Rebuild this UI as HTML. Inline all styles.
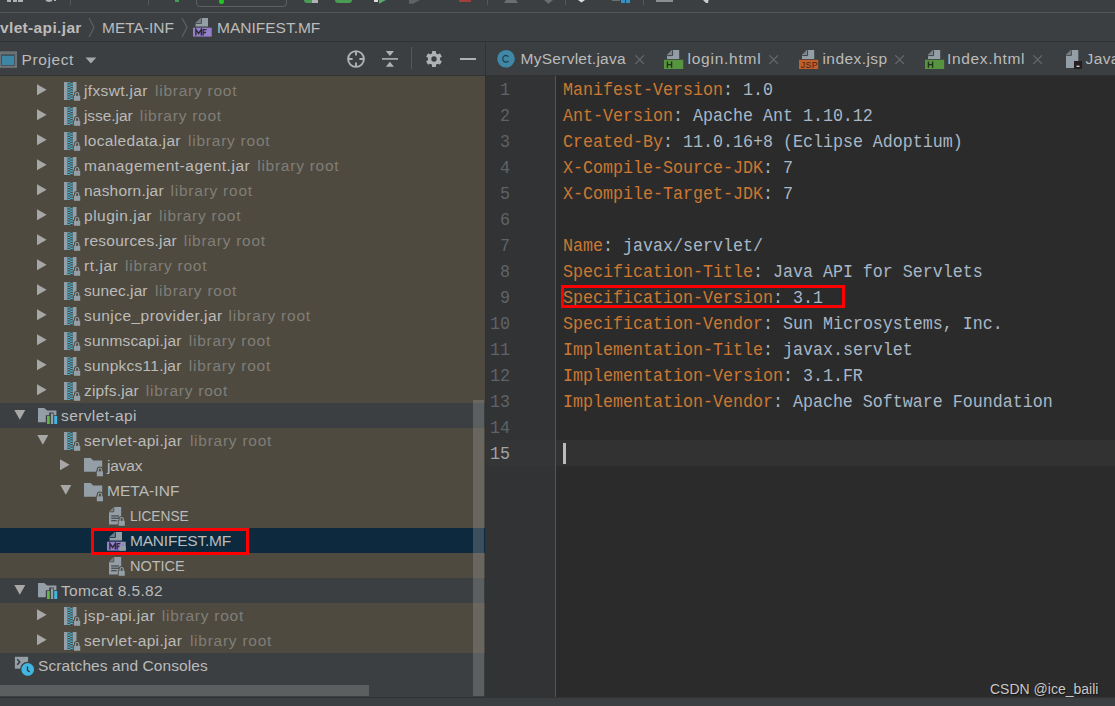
<!DOCTYPE html>
<html><head><meta charset="utf-8">
<style>
*{margin:0;padding:0;box-sizing:border-box}
html,body{width:1115px;height:706px;overflow:hidden;background:#3C3F41}
body{position:relative;font-family:"Liberation Sans",sans-serif;font-size:15.5px;color:#BBBBBB}
.a{position:absolute}
.t{position:absolute;white-space:pre;line-height:20px}
.lib{color:#807E78;letter-spacing:0.75px}
.ln{position:absolute;left:486px;width:24px;transform:translateY(2px) scaleY(1.08);transform-origin:0 19px;text-align:right;font-family:"Liberation Mono",monospace;font-size:16.67px;line-height:26px;white-space:pre}
.cl{position:absolute;left:563px;transform:translateY(2px) scaleY(1.08);transform-origin:0 19px;font-family:"Liberation Mono",monospace;font-size:16.67px;color:#A9B7C6;line-height:26px;white-space:pre}
.k{color:#CC7832}
</style></head><body>

<!-- top toolbar (cut off) -->
<div class="a" style="left:7px;top:0;width:4px;height:2px;background:#AFB1B3"></div>
<div class="a" style="left:12.5px;top:0;width:4px;height:2px;background:#AFB1B3"></div>
<div class="a" style="left:18px;top:0;width:4.5px;height:2px;background:#AFB1B3"></div>
<div class="a" style="left:44.5px;top:-6px;width:8px;height:8px;border-radius:50%;background:#AFB1B3"></div>
<div class="a" style="left:54px;top:0;width:2px;height:1px;background:#AFB1B3"></div>
<div class="a" style="left:70px;top:0;width:1px;height:5px;background:#55585A"></div>
<div class="a" style="left:148px;top:0;width:1px;height:5px;background:#55585A"></div>
<div class="a" style="left:486.5px;top:0;width:1px;height:5px;background:#55585A"></div>
<div class="a" style="left:564.5px;top:0;width:1px;height:5px;background:#55585A"></div>
<div class="a" style="left:642.5px;top:0;width:1px;height:5px;background:#55585A"></div>
<div class="a" style="left:175px;top:0;width:4px;height:2px;background:#499C54"></div>
<div class="a" style="left:195.5px;top:-10px;width:91.5px;height:17px;border:1px solid #5E6060;border-radius:4px"></div>
<div class="a" style="left:219px;top:-1px;width:5px;height:5px;border-radius:50%;background:#1EC81E"></div>
<div class="a" style="left:304px;top:0;width:8px;height:3px;background:#499C54;border-radius:0 0 0 4px"></div>
<div class="a" style="left:312px;top:0;width:6px;height:3px;background:#AFB1B3"></div>
<div class="a" style="left:335px;top:0;width:17px;height:3px;background:#499C54;border-radius:0 0 8px 8px"></div>
<div class="a" style="left:374px;top:0;width:4px;height:1.5px;background:#DDDDDD"></div>
<svg class="a" style="left:379px;top:0" width="8" height="4"><path d="M0 0H7L0 3.7z" fill="#59A869"/></svg>
<svg class="a" style="left:409px;top:0" width="12" height="4"><path d="M0 0H11L4 3.7H0z" fill="#606366"/></svg>
<div class="a" style="left:459px;top:0;width:12px;height:1.5px;background:#A0403C"></div>
<svg class="a" style="left:503px;top:0" width="16" height="4"><path d="M3 0H13L15 3H1z" fill="#6B6E70"/></svg>
<svg class="a" style="left:544px;top:0" width="9" height="4"><path d="M0 0H9L4.5 3.7z" fill="#6B6E70"/></svg>
<svg class="a" style="left:578px;top:0" width="8" height="3"><path d="M0 0H7L3.5 2.5z" fill="#DDDDDD"/></svg>
<div class="a" style="left:612px;top:0;width:8px;height:1px;background:#6B6E70"></div>
<div class="a" style="left:621px;top:0;width:4px;height:3px;background:#3592C4"></div>
<div class="a" style="left:626px;top:0;width:4px;height:3px;background:#3592C4"></div>
<div class="a" style="left:656px;top:0;width:17px;height:2px;background:#8C8E90"></div>
<svg class="a" style="left:703px;top:0" width="6" height="4"><path d="M0 0H5.5L5 3L3 3z" fill="#CCCCCC"/></svg>
<div class="a" style="left:0;top:12px;width:1115px;height:1px;background:#545658"></div>

<!-- breadcrumb bar -->
<div class="a" style="left:0;top:41px;width:1115px;height:1px;background:#323232"></div>
<div class="t" style="left:0;top:17.5px;font-weight:bold;letter-spacing:0.35px">vlet-api.jar</div>
<div class="t" style="left:102px;top:17.5px">META-INF</div>
<div class="t" style="left:217px;top:17.5px;letter-spacing:0px">MANIFEST.MF</div>

<!-- project header -->
<div class="t" style="left:21.5px;top:49.5px;letter-spacing:0.6px">Project</div>
<div class="a" style="left:485px;top:42px;width:1px;height:655px;background:#323232"></div>

<!-- tabs -->
<div class="t" style="left:520.5px;top:49px;letter-spacing:0.27px">MyServlet.java</div>
<div class="t" style="left:687.5px;top:49px;letter-spacing:0.75px">login.html</div>
<div class="t" style="left:822.5px;top:49px;letter-spacing:0.42px">index.jsp</div>
<div class="t" style="left:947px;top:49px;letter-spacing:0.67px">Index.html</div>
<div class="t" style="left:1085.5px;top:49px;letter-spacing:0.4px">Java</div>

<div class="a" style="left:0;top:76px;width:485px;height:2px;background:#4E4A3F"></div>
<div class="a" style="left:0;top:75px;width:1115px;height:1px;background:#323232"></div>
<div class="a" style="left:0;top:78px;width:485px;height:25px;background:#4E4A3F"></div>
<svg class="a" style="left:37px;top:84px" width="11" height="12"><path d="M0 0.3L9.6 5.8L0 11.3z" fill="#A7A7A7"/></svg>
<svg class="a" style="left:64.3px;top:82px" width="18" height="20" viewBox="0 0 18 20">
<rect x="0" y="0" width="3.5" height="18" fill="#939EA6"/>
<path d="M3.7 0.7h2.5M6.2 1.9h2.5M3.7 3.1h2.5M6.2 4.3h2.5M3.7 5.5h2.5M6.2 6.7h2.5M3.7 7.9h2.5M6.2 9.1h2.5M3.7 10.3h2.5M6.2 11.5h2.5M3.7 12.7h2.5M6.2 13.9h2.5M3.7 15.1h2.5M6.2 16.3h2.5M3.7 17.5h2.5" stroke="#40B6E0" stroke-width="1.15"/>
<rect x="8.8" y="0" width="3.7" height="18" fill="#939EA6"/>
<path d="M11.5 14.1V12.1a1.6 1.6 0 0 1 3.2 0V14.1" stroke="#4E4A3F" stroke-width="3.1" fill="none"/><rect x="9.2" y="13.1" width="7.8" height="6.5" fill="#4E4A3F"/><path d="M11.5 14.1V12.1a1.6 1.6 0 0 1 3.2 0V14.1" stroke="#939EA6" stroke-width="1.2" fill="none"/><rect x="10" y="13.8" width="6.2" height="5" fill="#939EA6"/>
</svg>
<div class="t" style="left:84px;top:81px;letter-spacing:0.345px">jfxswt.jar</div>
<div class="t lib" style="left:155.0px;top:81px">library root</div>
<div class="a" style="left:0;top:103px;width:485px;height:25px;background:#4E4A3F"></div>
<svg class="a" style="left:37px;top:109px" width="11" height="12"><path d="M0 0.3L9.6 5.8L0 11.3z" fill="#A7A7A7"/></svg>
<svg class="a" style="left:64.3px;top:107px" width="18" height="20" viewBox="0 0 18 20">
<rect x="0" y="0" width="3.5" height="18" fill="#939EA6"/>
<path d="M3.7 0.7h2.5M6.2 1.9h2.5M3.7 3.1h2.5M6.2 4.3h2.5M3.7 5.5h2.5M6.2 6.7h2.5M3.7 7.9h2.5M6.2 9.1h2.5M3.7 10.3h2.5M6.2 11.5h2.5M3.7 12.7h2.5M6.2 13.9h2.5M3.7 15.1h2.5M6.2 16.3h2.5M3.7 17.5h2.5" stroke="#40B6E0" stroke-width="1.15"/>
<rect x="8.8" y="0" width="3.7" height="18" fill="#939EA6"/>
<path d="M11.5 14.1V12.1a1.6 1.6 0 0 1 3.2 0V14.1" stroke="#4E4A3F" stroke-width="3.1" fill="none"/><rect x="9.2" y="13.1" width="7.8" height="6.5" fill="#4E4A3F"/><path d="M11.5 14.1V12.1a1.6 1.6 0 0 1 3.2 0V14.1" stroke="#939EA6" stroke-width="1.2" fill="none"/><rect x="10" y="13.8" width="6.2" height="5" fill="#939EA6"/>
</svg>
<div class="t" style="left:84px;top:106px;letter-spacing:-0.073px">jsse.jar</div>
<div class="t lib" style="left:139.7px;top:106px">library root</div>
<div class="a" style="left:0;top:128px;width:485px;height:25px;background:#4E4A3F"></div>
<svg class="a" style="left:37px;top:134px" width="11" height="12"><path d="M0 0.3L9.6 5.8L0 11.3z" fill="#A7A7A7"/></svg>
<svg class="a" style="left:64.3px;top:132px" width="18" height="20" viewBox="0 0 18 20">
<rect x="0" y="0" width="3.5" height="18" fill="#939EA6"/>
<path d="M3.7 0.7h2.5M6.2 1.9h2.5M3.7 3.1h2.5M6.2 4.3h2.5M3.7 5.5h2.5M6.2 6.7h2.5M3.7 7.9h2.5M6.2 9.1h2.5M3.7 10.3h2.5M6.2 11.5h2.5M3.7 12.7h2.5M6.2 13.9h2.5M3.7 15.1h2.5M6.2 16.3h2.5M3.7 17.5h2.5" stroke="#40B6E0" stroke-width="1.15"/>
<rect x="8.8" y="0" width="3.7" height="18" fill="#939EA6"/>
<path d="M11.5 14.1V12.1a1.6 1.6 0 0 1 3.2 0V14.1" stroke="#4E4A3F" stroke-width="3.1" fill="none"/><rect x="9.2" y="13.1" width="7.8" height="6.5" fill="#4E4A3F"/><path d="M11.5 14.1V12.1a1.6 1.6 0 0 1 3.2 0V14.1" stroke="#939EA6" stroke-width="1.2" fill="none"/><rect x="10" y="13.8" width="6.2" height="5" fill="#939EA6"/>
</svg>
<div class="t" style="left:84px;top:131px;letter-spacing:0.331px">localedata.jar</div>
<div class="t lib" style="left:188.1px;top:131px">library root</div>
<div class="a" style="left:0;top:153px;width:485px;height:25px;background:#4E4A3F"></div>
<svg class="a" style="left:37px;top:159px" width="11" height="12"><path d="M0 0.3L9.6 5.8L0 11.3z" fill="#A7A7A7"/></svg>
<svg class="a" style="left:64.3px;top:157px" width="18" height="20" viewBox="0 0 18 20">
<rect x="0" y="0" width="3.5" height="18" fill="#939EA6"/>
<path d="M3.7 0.7h2.5M6.2 1.9h2.5M3.7 3.1h2.5M6.2 4.3h2.5M3.7 5.5h2.5M6.2 6.7h2.5M3.7 7.9h2.5M6.2 9.1h2.5M3.7 10.3h2.5M6.2 11.5h2.5M3.7 12.7h2.5M6.2 13.9h2.5M3.7 15.1h2.5M6.2 16.3h2.5M3.7 17.5h2.5" stroke="#40B6E0" stroke-width="1.15"/>
<rect x="8.8" y="0" width="3.7" height="18" fill="#939EA6"/>
<path d="M11.5 14.1V12.1a1.6 1.6 0 0 1 3.2 0V14.1" stroke="#4E4A3F" stroke-width="3.1" fill="none"/><rect x="9.2" y="13.1" width="7.8" height="6.5" fill="#4E4A3F"/><path d="M11.5 14.1V12.1a1.6 1.6 0 0 1 3.2 0V14.1" stroke="#939EA6" stroke-width="1.2" fill="none"/><rect x="10" y="13.8" width="6.2" height="5" fill="#939EA6"/>
</svg>
<div class="t" style="left:84px;top:156px;letter-spacing:0.512px">management-agent.jar</div>
<div class="t lib" style="left:257.2px;top:156px">library root</div>
<div class="a" style="left:0;top:178px;width:485px;height:25px;background:#4E4A3F"></div>
<svg class="a" style="left:37px;top:184px" width="11" height="12"><path d="M0 0.3L9.6 5.8L0 11.3z" fill="#A7A7A7"/></svg>
<svg class="a" style="left:64.3px;top:182px" width="18" height="20" viewBox="0 0 18 20">
<rect x="0" y="0" width="3.5" height="18" fill="#939EA6"/>
<path d="M3.7 0.7h2.5M6.2 1.9h2.5M3.7 3.1h2.5M6.2 4.3h2.5M3.7 5.5h2.5M6.2 6.7h2.5M3.7 7.9h2.5M6.2 9.1h2.5M3.7 10.3h2.5M6.2 11.5h2.5M3.7 12.7h2.5M6.2 13.9h2.5M3.7 15.1h2.5M6.2 16.3h2.5M3.7 17.5h2.5" stroke="#40B6E0" stroke-width="1.15"/>
<rect x="8.8" y="0" width="3.7" height="18" fill="#939EA6"/>
<path d="M11.5 14.1V12.1a1.6 1.6 0 0 1 3.2 0V14.1" stroke="#4E4A3F" stroke-width="3.1" fill="none"/><rect x="9.2" y="13.1" width="7.8" height="6.5" fill="#4E4A3F"/><path d="M11.5 14.1V12.1a1.6 1.6 0 0 1 3.2 0V14.1" stroke="#939EA6" stroke-width="1.2" fill="none"/><rect x="10" y="13.8" width="6.2" height="5" fill="#939EA6"/>
</svg>
<div class="t" style="left:84px;top:181px;letter-spacing:0.205px">nashorn.jar</div>
<div class="t lib" style="left:170.6px;top:181px">library root</div>
<div class="a" style="left:0;top:203px;width:485px;height:25px;background:#4E4A3F"></div>
<svg class="a" style="left:37px;top:209px" width="11" height="12"><path d="M0 0.3L9.6 5.8L0 11.3z" fill="#A7A7A7"/></svg>
<svg class="a" style="left:64.3px;top:207px" width="18" height="20" viewBox="0 0 18 20">
<rect x="0" y="0" width="3.5" height="18" fill="#939EA6"/>
<path d="M3.7 0.7h2.5M6.2 1.9h2.5M3.7 3.1h2.5M6.2 4.3h2.5M3.7 5.5h2.5M6.2 6.7h2.5M3.7 7.9h2.5M6.2 9.1h2.5M3.7 10.3h2.5M6.2 11.5h2.5M3.7 12.7h2.5M6.2 13.9h2.5M3.7 15.1h2.5M6.2 16.3h2.5M3.7 17.5h2.5" stroke="#40B6E0" stroke-width="1.15"/>
<rect x="8.8" y="0" width="3.7" height="18" fill="#939EA6"/>
<path d="M11.5 14.1V12.1a1.6 1.6 0 0 1 3.2 0V14.1" stroke="#4E4A3F" stroke-width="3.1" fill="none"/><rect x="9.2" y="13.1" width="7.8" height="6.5" fill="#4E4A3F"/><path d="M11.5 14.1V12.1a1.6 1.6 0 0 1 3.2 0V14.1" stroke="#939EA6" stroke-width="1.2" fill="none"/><rect x="10" y="13.8" width="6.2" height="5" fill="#939EA6"/>
</svg>
<div class="t" style="left:84px;top:206px;letter-spacing:0.510px">plugin.jar</div>
<div class="t lib" style="left:159.0px;top:206px">library root</div>
<div class="a" style="left:0;top:228px;width:485px;height:25px;background:#4E4A3F"></div>
<svg class="a" style="left:37px;top:234px" width="11" height="12"><path d="M0 0.3L9.6 5.8L0 11.3z" fill="#A7A7A7"/></svg>
<svg class="a" style="left:64.3px;top:232px" width="18" height="20" viewBox="0 0 18 20">
<rect x="0" y="0" width="3.5" height="18" fill="#939EA6"/>
<path d="M3.7 0.7h2.5M6.2 1.9h2.5M3.7 3.1h2.5M6.2 4.3h2.5M3.7 5.5h2.5M6.2 6.7h2.5M3.7 7.9h2.5M6.2 9.1h2.5M3.7 10.3h2.5M6.2 11.5h2.5M3.7 12.7h2.5M6.2 13.9h2.5M3.7 15.1h2.5M6.2 16.3h2.5M3.7 17.5h2.5" stroke="#40B6E0" stroke-width="1.15"/>
<rect x="8.8" y="0" width="3.7" height="18" fill="#939EA6"/>
<path d="M11.5 14.1V12.1a1.6 1.6 0 0 1 3.2 0V14.1" stroke="#4E4A3F" stroke-width="3.1" fill="none"/><rect x="9.2" y="13.1" width="7.8" height="6.5" fill="#4E4A3F"/><path d="M11.5 14.1V12.1a1.6 1.6 0 0 1 3.2 0V14.1" stroke="#939EA6" stroke-width="1.2" fill="none"/><rect x="10" y="13.8" width="6.2" height="5" fill="#939EA6"/>
</svg>
<div class="t" style="left:84px;top:231px;letter-spacing:0.259px">resources.jar</div>
<div class="t lib" style="left:183.7px;top:231px">library root</div>
<div class="a" style="left:0;top:253px;width:485px;height:25px;background:#4E4A3F"></div>
<svg class="a" style="left:37px;top:259px" width="11" height="12"><path d="M0 0.3L9.6 5.8L0 11.3z" fill="#A7A7A7"/></svg>
<svg class="a" style="left:64.3px;top:257px" width="18" height="20" viewBox="0 0 18 20">
<rect x="0" y="0" width="3.5" height="18" fill="#939EA6"/>
<path d="M3.7 0.7h2.5M6.2 1.9h2.5M3.7 3.1h2.5M6.2 4.3h2.5M3.7 5.5h2.5M6.2 6.7h2.5M3.7 7.9h2.5M6.2 9.1h2.5M3.7 10.3h2.5M6.2 11.5h2.5M3.7 12.7h2.5M6.2 13.9h2.5M3.7 15.1h2.5M6.2 16.3h2.5M3.7 17.5h2.5" stroke="#40B6E0" stroke-width="1.15"/>
<rect x="8.8" y="0" width="3.7" height="18" fill="#939EA6"/>
<path d="M11.5 14.1V12.1a1.6 1.6 0 0 1 3.2 0V14.1" stroke="#4E4A3F" stroke-width="3.1" fill="none"/><rect x="9.2" y="13.1" width="7.8" height="6.5" fill="#4E4A3F"/><path d="M11.5 14.1V12.1a1.6 1.6 0 0 1 3.2 0V14.1" stroke="#939EA6" stroke-width="1.2" fill="none"/><rect x="10" y="13.8" width="6.2" height="5" fill="#939EA6"/>
</svg>
<div class="t" style="left:84px;top:256px;letter-spacing:0.540px">rt.jar</div>
<div class="t lib" style="left:125.0px;top:256px">library root</div>
<div class="a" style="left:0;top:278px;width:485px;height:25px;background:#4E4A3F"></div>
<svg class="a" style="left:37px;top:284px" width="11" height="12"><path d="M0 0.3L9.6 5.8L0 11.3z" fill="#A7A7A7"/></svg>
<svg class="a" style="left:64.3px;top:282px" width="18" height="20" viewBox="0 0 18 20">
<rect x="0" y="0" width="3.5" height="18" fill="#939EA6"/>
<path d="M3.7 0.7h2.5M6.2 1.9h2.5M3.7 3.1h2.5M6.2 4.3h2.5M3.7 5.5h2.5M6.2 6.7h2.5M3.7 7.9h2.5M6.2 9.1h2.5M3.7 10.3h2.5M6.2 11.5h2.5M3.7 12.7h2.5M6.2 13.9h2.5M3.7 15.1h2.5M6.2 16.3h2.5M3.7 17.5h2.5" stroke="#40B6E0" stroke-width="1.15"/>
<rect x="8.8" y="0" width="3.7" height="18" fill="#939EA6"/>
<path d="M11.5 14.1V12.1a1.6 1.6 0 0 1 3.2 0V14.1" stroke="#4E4A3F" stroke-width="3.1" fill="none"/><rect x="9.2" y="13.1" width="7.8" height="6.5" fill="#4E4A3F"/><path d="M11.5 14.1V12.1a1.6 1.6 0 0 1 3.2 0V14.1" stroke="#939EA6" stroke-width="1.2" fill="none"/><rect x="10" y="13.8" width="6.2" height="5" fill="#939EA6"/>
</svg>
<div class="t" style="left:84px;top:281px;letter-spacing:0.074px">sunec.jar</div>
<div class="t lib" style="left:154.9px;top:281px">library root</div>
<div class="a" style="left:0;top:303px;width:485px;height:25px;background:#4E4A3F"></div>
<svg class="a" style="left:37px;top:309px" width="11" height="12"><path d="M0 0.3L9.6 5.8L0 11.3z" fill="#A7A7A7"/></svg>
<svg class="a" style="left:64.3px;top:307px" width="18" height="20" viewBox="0 0 18 20">
<rect x="0" y="0" width="3.5" height="18" fill="#939EA6"/>
<path d="M3.7 0.7h2.5M6.2 1.9h2.5M3.7 3.1h2.5M6.2 4.3h2.5M3.7 5.5h2.5M6.2 6.7h2.5M3.7 7.9h2.5M6.2 9.1h2.5M3.7 10.3h2.5M6.2 11.5h2.5M3.7 12.7h2.5M6.2 13.9h2.5M3.7 15.1h2.5M6.2 16.3h2.5M3.7 17.5h2.5" stroke="#40B6E0" stroke-width="1.15"/>
<rect x="8.8" y="0" width="3.7" height="18" fill="#939EA6"/>
<path d="M11.5 14.1V12.1a1.6 1.6 0 0 1 3.2 0V14.1" stroke="#4E4A3F" stroke-width="3.1" fill="none"/><rect x="9.2" y="13.1" width="7.8" height="6.5" fill="#4E4A3F"/><path d="M11.5 14.1V12.1a1.6 1.6 0 0 1 3.2 0V14.1" stroke="#939EA6" stroke-width="1.2" fill="none"/><rect x="10" y="13.8" width="6.2" height="5" fill="#939EA6"/>
</svg>
<div class="t" style="left:84px;top:306px;letter-spacing:0.449px">sunjce_provider.jar</div>
<div class="t lib" style="left:228.6px;top:306px">library root</div>
<div class="a" style="left:0;top:328px;width:485px;height:25px;background:#4E4A3F"></div>
<svg class="a" style="left:37px;top:334px" width="11" height="12"><path d="M0 0.3L9.6 5.8L0 11.3z" fill="#A7A7A7"/></svg>
<svg class="a" style="left:64.3px;top:332px" width="18" height="20" viewBox="0 0 18 20">
<rect x="0" y="0" width="3.5" height="18" fill="#939EA6"/>
<path d="M3.7 0.7h2.5M6.2 1.9h2.5M3.7 3.1h2.5M6.2 4.3h2.5M3.7 5.5h2.5M6.2 6.7h2.5M3.7 7.9h2.5M6.2 9.1h2.5M3.7 10.3h2.5M6.2 11.5h2.5M3.7 12.7h2.5M6.2 13.9h2.5M3.7 15.1h2.5M6.2 16.3h2.5M3.7 17.5h2.5" stroke="#40B6E0" stroke-width="1.15"/>
<rect x="8.8" y="0" width="3.7" height="18" fill="#939EA6"/>
<path d="M11.5 14.1V12.1a1.6 1.6 0 0 1 3.2 0V14.1" stroke="#4E4A3F" stroke-width="3.1" fill="none"/><rect x="9.2" y="13.1" width="7.8" height="6.5" fill="#4E4A3F"/><path d="M11.5 14.1V12.1a1.6 1.6 0 0 1 3.2 0V14.1" stroke="#939EA6" stroke-width="1.2" fill="none"/><rect x="10" y="13.8" width="6.2" height="5" fill="#939EA6"/>
</svg>
<div class="t" style="left:84px;top:331px;letter-spacing:0.148px">sunmscapi.jar</div>
<div class="t lib" style="left:188.8px;top:331px">library root</div>
<div class="a" style="left:0;top:353px;width:485px;height:25px;background:#4E4A3F"></div>
<svg class="a" style="left:37px;top:359px" width="11" height="12"><path d="M0 0.3L9.6 5.8L0 11.3z" fill="#A7A7A7"/></svg>
<svg class="a" style="left:64.3px;top:357px" width="18" height="20" viewBox="0 0 18 20">
<rect x="0" y="0" width="3.5" height="18" fill="#939EA6"/>
<path d="M3.7 0.7h2.5M6.2 1.9h2.5M3.7 3.1h2.5M6.2 4.3h2.5M3.7 5.5h2.5M6.2 6.7h2.5M3.7 7.9h2.5M6.2 9.1h2.5M3.7 10.3h2.5M6.2 11.5h2.5M3.7 12.7h2.5M6.2 13.9h2.5M3.7 15.1h2.5M6.2 16.3h2.5M3.7 17.5h2.5" stroke="#40B6E0" stroke-width="1.15"/>
<rect x="8.8" y="0" width="3.7" height="18" fill="#939EA6"/>
<path d="M11.5 14.1V12.1a1.6 1.6 0 0 1 3.2 0V14.1" stroke="#4E4A3F" stroke-width="3.1" fill="none"/><rect x="9.2" y="13.1" width="7.8" height="6.5" fill="#4E4A3F"/><path d="M11.5 14.1V12.1a1.6 1.6 0 0 1 3.2 0V14.1" stroke="#939EA6" stroke-width="1.2" fill="none"/><rect x="10" y="13.8" width="6.2" height="5" fill="#939EA6"/>
</svg>
<div class="t" style="left:84px;top:356px;letter-spacing:0.243px">sunpkcs11.jar</div>
<div class="t lib" style="left:188.8px;top:356px">library root</div>
<div class="a" style="left:0;top:378px;width:485px;height:25px;background:#4E4A3F"></div>
<svg class="a" style="left:37px;top:384px" width="11" height="12"><path d="M0 0.3L9.6 5.8L0 11.3z" fill="#A7A7A7"/></svg>
<svg class="a" style="left:64.3px;top:382px" width="18" height="20" viewBox="0 0 18 20">
<rect x="0" y="0" width="3.5" height="18" fill="#939EA6"/>
<path d="M3.7 0.7h2.5M6.2 1.9h2.5M3.7 3.1h2.5M6.2 4.3h2.5M3.7 5.5h2.5M6.2 6.7h2.5M3.7 7.9h2.5M6.2 9.1h2.5M3.7 10.3h2.5M6.2 11.5h2.5M3.7 12.7h2.5M6.2 13.9h2.5M3.7 15.1h2.5M6.2 16.3h2.5M3.7 17.5h2.5" stroke="#40B6E0" stroke-width="1.15"/>
<rect x="8.8" y="0" width="3.7" height="18" fill="#939EA6"/>
<path d="M11.5 14.1V12.1a1.6 1.6 0 0 1 3.2 0V14.1" stroke="#4E4A3F" stroke-width="3.1" fill="none"/><rect x="9.2" y="13.1" width="7.8" height="6.5" fill="#4E4A3F"/><path d="M11.5 14.1V12.1a1.6 1.6 0 0 1 3.2 0V14.1" stroke="#939EA6" stroke-width="1.2" fill="none"/><rect x="10" y="13.8" width="6.2" height="5" fill="#939EA6"/>
</svg>
<div class="t" style="left:84px;top:381px;letter-spacing:0.162px">zipfs.jar</div>
<div class="t lib" style="left:145.8px;top:381px">library root</div>
<div class="a" style="left:0;top:403px;width:485px;height:25px;background:#3C3F41"></div>
<svg class="a" style="left:14px;top:410px" width="12" height="11"><path d="M0.3 0H11.3L5.8 9.8z" fill="#A7A7A7"/></svg>
<svg class="a" style="left:37.9px;top:408px" width="21" height="18" viewBox="0 0 21 18">
<path d="M0 0H6.1L9.3 2.6H18.4V14.3H0z" fill="#939EA6"/>
<path d="M8.5 16.5V8h3.4V5.2h3.2V8h3.4V16.5z" fill="#3C3F41" stroke="#3C3F41" stroke-width="1.4"/>
<rect x="9" y="8" width="2.8" height="8" fill="#62B543"/>
<rect x="12.9" y="5.5" width="2.3" height="10.5" fill="#939EA6"/>
<rect x="16.2" y="8" width="3" height="8" fill="#40B6E0"/>
</svg>
<div class="t" style="left:61px;top:406px;letter-spacing:0.390px">servlet-api</div>
<div class="a" style="left:0;top:428px;width:485px;height:25px;background:#4E4A3F"></div>
<svg class="a" style="left:37px;top:435px" width="12" height="11"><path d="M0.3 0H11.3L5.8 9.8z" fill="#A7A7A7"/></svg>
<svg class="a" style="left:64.3px;top:432px" width="18" height="20" viewBox="0 0 18 20">
<rect x="0" y="0" width="3.5" height="18" fill="#939EA6"/>
<path d="M3.7 0.7h2.5M6.2 1.9h2.5M3.7 3.1h2.5M6.2 4.3h2.5M3.7 5.5h2.5M6.2 6.7h2.5M3.7 7.9h2.5M6.2 9.1h2.5M3.7 10.3h2.5M6.2 11.5h2.5M3.7 12.7h2.5M6.2 13.9h2.5M3.7 15.1h2.5M6.2 16.3h2.5M3.7 17.5h2.5" stroke="#40B6E0" stroke-width="1.15"/>
<rect x="8.8" y="0" width="3.7" height="18" fill="#939EA6"/>
<path d="M11.5 14.1V12.1a1.6 1.6 0 0 1 3.2 0V14.1" stroke="#4E4A3F" stroke-width="3.1" fill="none"/><rect x="9.2" y="13.1" width="7.8" height="6.5" fill="#4E4A3F"/><path d="M11.5 14.1V12.1a1.6 1.6 0 0 1 3.2 0V14.1" stroke="#939EA6" stroke-width="1.2" fill="none"/><rect x="10" y="13.8" width="6.2" height="5" fill="#939EA6"/>
</svg>
<div class="t" style="left:84px;top:431px;letter-spacing:0.355px">servlet-api.jar</div>
<div class="t lib" style="left:189.9px;top:431px">library root</div>
<div class="a" style="left:0;top:453px;width:485px;height:25px;background:#4E4A3F"></div>
<svg class="a" style="left:60px;top:459px" width="11" height="12"><path d="M0 0.3L9.6 5.8L0 11.3z" fill="#A7A7A7"/></svg>
<svg class="a" style="left:84px;top:458.3px" width="22" height="20" viewBox="0 0 22 20">
<path d="M0 0H6.7L9.2 2.5H18.2V13.7H0z" fill="#939EA6"/>
<path d="M14.3 13.6V11.6a1.6 1.6 0 0 1 3.2 0V13.6" stroke="#4E4A3F" stroke-width="3.1" fill="none"/><rect x="12.0" y="12.6" width="7.8" height="6.5" fill="#4E4A3F"/><path d="M14.3 13.6V11.6a1.6 1.6 0 0 1 3.2 0V13.6" stroke="#939EA6" stroke-width="1.2" fill="none"/><rect x="12.8" y="13.3" width="6.2" height="5" fill="#939EA6"/>
</svg>
<div class="t" style="left:107px;top:456px;letter-spacing:-0.147px">javax</div>
<div class="a" style="left:0;top:478px;width:485px;height:25px;background:#4E4A3F"></div>
<svg class="a" style="left:60px;top:485px" width="12" height="11"><path d="M0.3 0H11.3L5.8 9.8z" fill="#A7A7A7"/></svg>
<svg class="a" style="left:84px;top:483.3px" width="22" height="20" viewBox="0 0 22 20">
<path d="M0 0H6.7L9.2 2.5H18.2V13.7H0z" fill="#939EA6"/>
<path d="M14.3 13.6V11.6a1.6 1.6 0 0 1 3.2 0V13.6" stroke="#4E4A3F" stroke-width="3.1" fill="none"/><rect x="12.0" y="12.6" width="7.8" height="6.5" fill="#4E4A3F"/><path d="M14.3 13.6V11.6a1.6 1.6 0 0 1 3.2 0V13.6" stroke="#939EA6" stroke-width="1.2" fill="none"/><rect x="12.8" y="13.3" width="6.2" height="5" fill="#939EA6"/>
</svg>
<div class="t" style="left:107px;top:481px;letter-spacing:0.050px">META-INF</div>
<div class="a" style="left:0;top:503px;width:485px;height:25px;background:#4E4A3F"></div>
<svg class="a" style="left:109.1px;top:507.2px" width="18" height="20" viewBox="0 0 18 20">
<path d="M4.8 0H12.2V17.6H0V4.8z" fill="#939EA6"/>
<path d="M0 4.8H4.8V0z" fill="#4E4A3F" opacity="0.35"/>
<path d="M0.2 4.8H4.8V0.2" stroke="#4E4A3F" stroke-width="0.8" fill="none"/>
<rect x="2.2" y="8.3" width="7.8" height="1.3" fill="#4A4D4F"/>
<rect x="2.2" y="10.6" width="8" height="1.3" fill="#4A4D4F"/>
<rect x="2.2" y="13" width="5.5" height="1.3" fill="#4A4D4F"/>
<path d="M11.1 14.1V12.1a1.6 1.6 0 0 1 3.2 0V14.1" stroke="#4E4A3F" stroke-width="3.1" fill="none"/><rect x="8.799999999999999" y="13.1" width="7.8" height="6.5" fill="#4E4A3F"/><path d="M11.1 14.1V12.1a1.6 1.6 0 0 1 3.2 0V14.1" stroke="#939EA6" stroke-width="1.2" fill="none"/><rect x="9.6" y="13.8" width="6.2" height="5" fill="#939EA6"/>
</svg>
<div class="t" style="left:130px;top:506px;transform:scaleX(0.8861);transform-origin:0 0">LICENSE</div>
<div class="a" style="left:0;top:528px;width:485px;height:25px;background:#0D293E"></div>
<svg class="a" style="left:106.5px;top:532.2px" width="20" height="20" viewBox="0 0 20 20">
<path d="M7.8 0H15V8.5H2.6V4.8z" fill="#939EA6"/>
<path d="M2.6 4.8H7.8V0z" fill="#0D293E" opacity="0.3"/>
<path d="M2.8 5.4H8.4V0.2" stroke="#0D293E" stroke-width="0.9" fill="none"/>
<rect x="-0.3" y="9.7" width="19" height="8.9" fill="#9380C9"/>
<path d="M2.9 17.6V11.5L5.6 15.4L8.3 11.5V17.6M10.1 17.6V11.6H13.6M10.1 14.5H13.1" stroke="#2F2A3A" stroke-width="1.4" fill="none"/>
<path d="M14.1 14.6V12.2a1.7 1.7 0 0 1 3.4 0V14.6" stroke="#939EA6" stroke-width="1.3" fill="none"/><rect x="12.3" y="14.1" width="6.5" height="4.6" fill="#939EA6"/>
</svg>
<div class="t" style="left:130px;top:531px;letter-spacing:-0.204px">MANIFEST.MF</div>
<div class="a" style="left:0;top:553px;width:485px;height:25px;background:#4E4A3F"></div>
<svg class="a" style="left:109.1px;top:557.2px" width="18" height="20" viewBox="0 0 18 20">
<path d="M4.8 0H12.2V17.6H0V4.8z" fill="#939EA6"/>
<path d="M0 4.8H4.8V0z" fill="#4E4A3F" opacity="0.35"/>
<path d="M0.2 4.8H4.8V0.2" stroke="#4E4A3F" stroke-width="0.8" fill="none"/>
<rect x="2.2" y="8.3" width="7.8" height="1.3" fill="#4A4D4F"/>
<rect x="2.2" y="10.6" width="8" height="1.3" fill="#4A4D4F"/>
<rect x="2.2" y="13" width="5.5" height="1.3" fill="#4A4D4F"/>
<path d="M11.1 14.1V12.1a1.6 1.6 0 0 1 3.2 0V14.1" stroke="#4E4A3F" stroke-width="3.1" fill="none"/><rect x="8.799999999999999" y="13.1" width="7.8" height="6.5" fill="#4E4A3F"/><path d="M11.1 14.1V12.1a1.6 1.6 0 0 1 3.2 0V14.1" stroke="#939EA6" stroke-width="1.2" fill="none"/><rect x="9.6" y="13.8" width="6.2" height="5" fill="#939EA6"/>
</svg>
<div class="t" style="left:130px;top:556px;transform:scaleX(0.9346);transform-origin:0 0">NOTICE</div>
<div class="a" style="left:0;top:578px;width:485px;height:25px;background:#3C3F41"></div>
<svg class="a" style="left:14px;top:585px" width="12" height="11"><path d="M0.3 0H11.3L5.8 9.8z" fill="#A7A7A7"/></svg>
<svg class="a" style="left:37.9px;top:583px" width="21" height="18" viewBox="0 0 21 18">
<path d="M0 0H6.1L9.3 2.6H18.4V14.3H0z" fill="#939EA6"/>
<path d="M8.5 16.5V8h3.4V5.2h3.2V8h3.4V16.5z" fill="#3C3F41" stroke="#3C3F41" stroke-width="1.4"/>
<rect x="9" y="8" width="2.8" height="8" fill="#62B543"/>
<rect x="12.9" y="5.5" width="2.3" height="10.5" fill="#939EA6"/>
<rect x="16.2" y="8" width="3" height="8" fill="#40B6E0"/>
</svg>
<div class="t" style="left:61px;top:581px;letter-spacing:0.362px">Tomcat 8.5.82</div>
<div class="a" style="left:0;top:603px;width:485px;height:25px;background:#4E4A3F"></div>
<svg class="a" style="left:37px;top:609px" width="11" height="12"><path d="M0 0.3L9.6 5.8L0 11.3z" fill="#A7A7A7"/></svg>
<svg class="a" style="left:64.3px;top:607px" width="18" height="20" viewBox="0 0 18 20">
<rect x="0" y="0" width="3.5" height="18" fill="#939EA6"/>
<path d="M3.7 0.7h2.5M6.2 1.9h2.5M3.7 3.1h2.5M6.2 4.3h2.5M3.7 5.5h2.5M6.2 6.7h2.5M3.7 7.9h2.5M6.2 9.1h2.5M3.7 10.3h2.5M6.2 11.5h2.5M3.7 12.7h2.5M6.2 13.9h2.5M3.7 15.1h2.5M6.2 16.3h2.5M3.7 17.5h2.5" stroke="#40B6E0" stroke-width="1.15"/>
<rect x="8.8" y="0" width="3.7" height="18" fill="#939EA6"/>
<path d="M11.5 14.1V12.1a1.6 1.6 0 0 1 3.2 0V14.1" stroke="#4E4A3F" stroke-width="3.1" fill="none"/><rect x="9.2" y="13.1" width="7.8" height="6.5" fill="#4E4A3F"/><path d="M11.5 14.1V12.1a1.6 1.6 0 0 1 3.2 0V14.1" stroke="#939EA6" stroke-width="1.2" fill="none"/><rect x="10" y="13.8" width="6.2" height="5" fill="#939EA6"/>
</svg>
<div class="t" style="left:84px;top:606px;letter-spacing:0.350px">jsp-api.jar</div>
<div class="t lib" style="left:161.8px;top:606px">library root</div>
<div class="a" style="left:0;top:628px;width:485px;height:25px;background:#4E4A3F"></div>
<svg class="a" style="left:37px;top:634px" width="11" height="12"><path d="M0 0.3L9.6 5.8L0 11.3z" fill="#A7A7A7"/></svg>
<svg class="a" style="left:64.3px;top:632px" width="18" height="20" viewBox="0 0 18 20">
<rect x="0" y="0" width="3.5" height="18" fill="#939EA6"/>
<path d="M3.7 0.7h2.5M6.2 1.9h2.5M3.7 3.1h2.5M6.2 4.3h2.5M3.7 5.5h2.5M6.2 6.7h2.5M3.7 7.9h2.5M6.2 9.1h2.5M3.7 10.3h2.5M6.2 11.5h2.5M3.7 12.7h2.5M6.2 13.9h2.5M3.7 15.1h2.5M6.2 16.3h2.5M3.7 17.5h2.5" stroke="#40B6E0" stroke-width="1.15"/>
<rect x="8.8" y="0" width="3.7" height="18" fill="#939EA6"/>
<path d="M11.5 14.1V12.1a1.6 1.6 0 0 1 3.2 0V14.1" stroke="#4E4A3F" stroke-width="3.1" fill="none"/><rect x="9.2" y="13.1" width="7.8" height="6.5" fill="#4E4A3F"/><path d="M11.5 14.1V12.1a1.6 1.6 0 0 1 3.2 0V14.1" stroke="#939EA6" stroke-width="1.2" fill="none"/><rect x="10" y="13.8" width="6.2" height="5" fill="#939EA6"/>
</svg>
<div class="t" style="left:84px;top:631px;letter-spacing:0.355px">servlet-api.jar</div>
<div class="t lib" style="left:189.9px;top:631px">library root</div>
<div class="a" style="left:0;top:653px;width:485px;height:25px;background:#3C3F41"></div>
<svg class="a" style="left:14px;top:656px" width="24" height="22" viewBox="0 0 24 22">
<rect x="0.9" y="0.8" width="13.2" height="11.9" fill="#939EA6"/>
<path d="M3.2 3.2L5.8 5.9L3.2 8.7" stroke="#2F3133" stroke-width="1.3" fill="none"/>
<circle cx="13.7" cy="13.4" r="7" fill="#40B6E0" stroke="#3C3F41" stroke-width="1.3"/>
<path d="M13.5 10.6V14.2L15.6 16" stroke="#2F3133" stroke-width="1.3" fill="none"/>
</svg>
<div class="t" style="left:38px;top:656px;letter-spacing:0.080px">Scratches and Consoles</div>
<div class="a" style="left:91px;top:528px;width:158px;height:27px;border:3px solid #FF0000"></div>
<div class="a" style="left:473px;top:400px;width:11px;height:296px;background:rgba(170,170,170,0.3)"></div>
<div class="a" style="left:0;top:685px;width:369px;height:11px;background:rgba(170,170,170,0.3)"></div>

<div class="a" style="left:486px;top:76px;width:69px;height:621px;background:#313335"></div>
<div class="a" style="left:486px;top:440px;width:69px;height:26px;background:#333537"></div>
<div class="a" style="left:486px;top:75px;width:629px;height:1px;background:#323232"></div>
<div class="a" style="left:555px;top:76px;width:1px;height:621px;background:#555555"></div>
<div class="a" style="left:556px;top:76px;width:559px;height:621px;background:#2B2B2B"></div>
<div class="a" style="left:556px;top:440px;width:559px;height:26px;background:#323232"></div>
<div class="ln" style="top:76px;color:#606366">1</div>
<div class="cl" style="top:76px"><span class="k">Manifest-Version</span>: 1.0</div>
<div class="ln" style="top:102px;color:#606366">2</div>
<div class="cl" style="top:102px"><span class="k">Ant-Version</span>: Apache Ant 1.10.12</div>
<div class="ln" style="top:128px;color:#606366">3</div>
<div class="cl" style="top:128px"><span class="k">Created-By</span>: 11.0.16+8 (Eclipse Adoptium)</div>
<div class="ln" style="top:154px;color:#606366">4</div>
<div class="cl" style="top:154px"><span class="k">X-Compile-Source-JDK</span>: 7</div>
<div class="ln" style="top:180px;color:#606366">5</div>
<div class="cl" style="top:180px"><span class="k">X-Compile-Target-JDK</span>: 7</div>
<div class="ln" style="top:206px;color:#606366">6</div>
<div class="ln" style="top:232px;color:#606366">7</div>
<div class="cl" style="top:232px"><span class="k">Name</span>: javax/servlet/</div>
<div class="ln" style="top:258px;color:#606366">8</div>
<div class="cl" style="top:258px"><span class="k">Specification-Title</span>: Java API for Servlets</div>
<div class="ln" style="top:284px;color:#606366">9</div>
<div class="cl" style="top:284px"><span class="k">Specification-Version</span>: 3.1</div>
<div class="ln" style="top:310px;color:#606366">10</div>
<div class="cl" style="top:310px"><span class="k">Specification-Vendor</span>: Sun Microsystems, Inc.</div>
<div class="ln" style="top:336px;color:#606366">11</div>
<div class="cl" style="top:336px"><span class="k">Implementation-Title</span>: javax.servlet</div>
<div class="ln" style="top:362px;color:#606366">12</div>
<div class="cl" style="top:362px"><span class="k">Implementation-Version</span>: 3.1.FR</div>
<div class="ln" style="top:388px;color:#606366">13</div>
<div class="cl" style="top:388px"><span class="k">Implementation-Vendor</span>: Apache Software Foundation</div>
<div class="ln" style="top:414px;color:#606366">14</div>
<div class="ln" style="top:440px;color:#A4A3A3">15</div>
<div class="a" style="left:563px;top:443px;width:3px;height:21px;background:#BBBBBB"></div>
<div class="a" style="left:561px;top:285px;width:284px;height:23px;border:3px solid #FF0000"></div>
<svg class="a" style="left:0;top:51px" width="18" height="18" viewBox="0 0 18 18">
<rect x="0" y="0.3" width="17" height="16.6" fill="#6C7377"/>
<rect x="1.3" y="3.6" width="13.3" height="10.9" fill="#2B2D2F"/>
<rect x="1.8" y="4.5" width="12.4" height="9.6" fill="#3E86A6"/>
</svg>
<svg class="a" style="left:85px;top:57px" width="12" height="7"><path d="M0.5 0.5H11.3L5.9 6.4z" fill="#A7A7A7"/></svg>
<svg class="a" style="left:347px;top:50px" width="18" height="18" viewBox="0 0 18 18">
<circle cx="9" cy="9" r="7.9" stroke="#AFB1B3" stroke-width="1.9" fill="none"/>
<path d="M9 1v4.6M9 12.4v4.6M1 9h4.6M12.4 9h4.6" stroke="#AFB1B3" stroke-width="1.9"/>
</svg>
<svg class="a" style="left:382px;top:50px" width="17" height="18" viewBox="0 0 17 18">
<path d="M0 8.9H16" stroke="#AFB1B3" stroke-width="1.6"/>
<path d="M3.8 1H12L7.9 6z M3.8 16.7H12L7.9 11.7z" fill="#AFB1B3"/>
</svg>
<div class="a" style="left:411px;top:47px;width:1px;height:22px;background:#555759"></div>
<svg class="a" style="left:425px;top:50px" width="18" height="18" viewBox="0 0 18 18">
<g transform="translate(9 9)" fill="#AFB1B3">
<rect x="-2" y="-8" width="4" height="16" rx="0.6"/>
<rect x="-2" y="-8" width="4" height="16" rx="0.6" transform="rotate(60)"/>
<rect x="-2" y="-8" width="4" height="16" rx="0.6" transform="rotate(120)"/>
<circle r="6.1"/>
</g>
<circle cx="9" cy="9" r="2.7" fill="#3C3F41"/>
</svg>
<div class="a" style="left:460px;top:58px;width:16px;height:2px;background:#AFB1B3"></div>
<svg class="a" style="left:497px;top:50px" width="18" height="18" viewBox="0 0 18 18">
<circle cx="9" cy="8.8" r="8.8" fill="#3F88A7"/>
<path d="M11.5 6.6A3.3 3.3 0 1 0 11.5 11" stroke="#233F4A" stroke-width="1.25" fill="none"/>
</svg>
<svg class="a" style="left:664px;top:50px" width="20" height="20" viewBox="0 0 20 20">
<path d="M7.8 0H15.2V8.9H3V4.8z" fill="#939EA6"/>
<path d="M3 4.8H7.8V0z" fill="#3C3F41" opacity="0.3"/>
<path d="M3.2 5.6H8.6V0.2" stroke="#3C3F41" stroke-width="1" fill="none"/>
<rect x="0" y="9.8" width="19.2" height="9.2" fill="#57943F"/>
<path d="M3.4 17.8V11.6M7.6 17.8V11.6M3.4 14.6H7.6" stroke="#1F3319" stroke-width="1.35"/>
</svg>
<svg class="a" style="left:799px;top:50px" width="20" height="20" viewBox="0 0 20 20">
<path d="M7.8 0H15.2V8.9H3V4.8z" fill="#939EA6"/>
<path d="M3 4.8H7.8V0z" fill="#3C3F41" opacity="0.3"/>
<path d="M3.2 5.6H8.6V0.2" stroke="#3C3F41" stroke-width="1" fill="none"/>
<rect x="0" y="9.8" width="19.2" height="9.2" fill="#C35E29"/>
<text x="1.8" y="17.6" font-family="Liberation Sans" font-size="8.6" fill="#3A2416" letter-spacing="0.4">JSP</text>
</svg>
<svg class="a" style="left:925px;top:50px" width="20" height="20" viewBox="0 0 20 20">
<path d="M7.8 0H15.2V8.9H3V4.8z" fill="#939EA6"/>
<path d="M3 4.8H7.8V0z" fill="#3C3F41" opacity="0.3"/>
<path d="M3.2 5.6H8.6V0.2" stroke="#3C3F41" stroke-width="1" fill="none"/>
<rect x="0" y="9.8" width="19.2" height="9.2" fill="#57943F"/>
<path d="M3.4 17.8V11.6M7.6 17.8V11.6M3.4 14.6H7.6" stroke="#1F3319" stroke-width="1.35"/>
</svg>
<svg class="a" style="left:1066px;top:50px" width="17" height="20" viewBox="0 0 17 20">
<path d="M4.8 0H12.3V18H0V4.8z" fill="#939EA6"/>
<path d="M0 4.8H4.8V0z" fill="#3C3F41" opacity="0.35"/>
<path d="M0.2 5.4H5.4V0.2" stroke="#3C3F41" stroke-width="0.9" fill="none"/>
<rect x="8" y="11" width="8" height="7.8" fill="#231F20"/>
<rect x="10.5" y="15.6" width="3" height="1.4" fill="#CCCCCC"/>
</svg>
<svg class="a" style="left:635px;top:54.5px" width="10" height="10" viewBox="0 0 10 10"><path d="M0.3 0.3L9 9M9 0.3L0.3 9" stroke="#67696B" stroke-width="1.1"/></svg>
<svg class="a" style="left:769px;top:54.5px" width="10" height="10" viewBox="0 0 10 10"><path d="M0.3 0.3L9 9M9 0.3L0.3 9" stroke="#67696B" stroke-width="1.1"/></svg>
<svg class="a" style="left:895px;top:54.5px" width="10" height="10" viewBox="0 0 10 10"><path d="M0.3 0.3L9 9M9 0.3L0.3 9" stroke="#67696B" stroke-width="1.1"/></svg>
<svg class="a" style="left:1033px;top:54.5px" width="10" height="10" viewBox="0 0 10 10"><path d="M0.3 0.3L9 9M9 0.3L0.3 9" stroke="#67696B" stroke-width="1.1"/></svg>
<svg class="a" style="left:87.5px;top:17px" width="8" height="21"><path d="M1 1L6 10.2L1 20" stroke="#5E6163" stroke-width="1.2" fill="none"/></svg>
<svg class="a" style="left:180.5px;top:17px" width="8" height="21"><path d="M1 1L6 10.2L1 20" stroke="#5E6163" stroke-width="1.2" fill="none"/></svg>
<svg class="a" style="left:193px;top:17.8px" width="20" height="20" viewBox="0 0 20 20">
<path d="M7.8 0H15V8.5H2.6V4.8z" fill="#939EA6"/>
<path d="M2.6 4.8H7.8V0z" fill="#3C3F41" opacity="0.3"/>
<path d="M2.8 5.4H8.4V0.2" stroke="#3C3F41" stroke-width="0.9" fill="none"/>
<rect x="-0.3" y="9.7" width="19" height="8.9" fill="#9380C9"/>
<path d="M2.9 17.6V11.5L5.6 15.4L8.3 11.5V17.6M10.1 17.6V11.6H13.6M10.1 14.5H13.1" stroke="#2F2A3A" stroke-width="1.4" fill="none"/>

</svg>

<div class="t" style="left:990px;top:679px;font-size:14px;color:#C8C8C8;text-shadow:1px 1px 1px rgba(0,0,0,0.5)">CSDN @ice_baili</div>
<!-- status bar -->
<div class="a" style="left:0;top:697px;width:1115px;height:1px;background:#323232"></div>
<div class="a" style="left:0;top:698px;width:1115px;height:8px;background:#3C3F41"></div>
</body></html>
